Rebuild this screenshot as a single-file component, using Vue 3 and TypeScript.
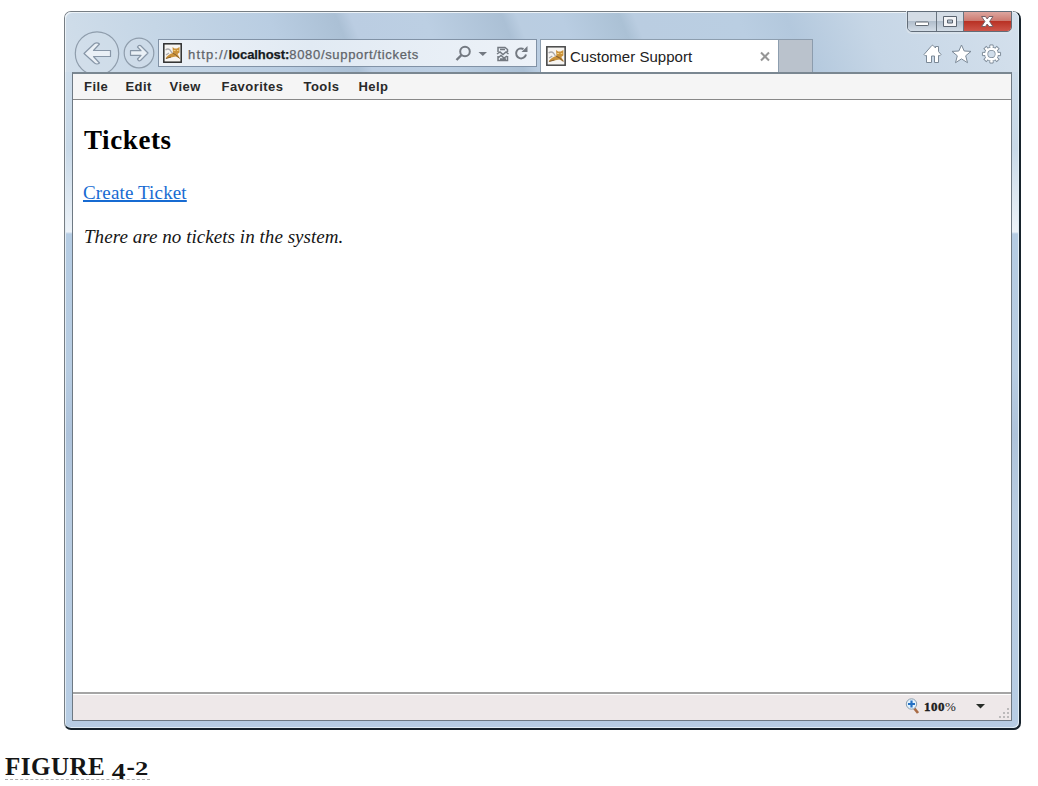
<script setup lang="ts">
const menus = [
  { label: 'File', width: 41.5 },
  { label: 'Edit', width: 44 },
  { label: 'View', width: 52 },
  { label: 'Favorites', width: 82 },
  { label: 'Tools', width: 55 },
  { label: 'Help', width: 40 },
]
const teeth = [0, 45, 90, 135, 180, 225, 270, 315]
const grip = [[8, 0], [4, 4], [8, 4], [0, 8], [4, 8], [8, 8]]
</script>

<template>
  <main class="page">
    <section class="window">
      <header class="chrome">
        <div class="nav">
          <svg class="back" width="46" height="41" viewBox="0 0 46 41">
            <circle cx="23" cy="22.5" r="21.7" fill="#d4dfea" fill-opacity=".45" stroke="#8f9dac" stroke-width="1.2" />
            <path d="M10 22.5 20.5 12.5Q23 11 25.5 13L19.5 19.5H36.5V25.5H19.5L25.5 32Q23 34 20.5 32Z" fill="#eaf0f6" stroke="#8796a7" stroke-width="1.2" stroke-linejoin="round" />
          </svg>
          <svg class="forward" width="32" height="32" viewBox="0 0 32 32">
            <circle cx="16" cy="16" r="14.8" fill="#d4dfea" fill-opacity=".45" stroke="#8f9dac" stroke-width="1.2" />
            <path d="M25 16 17.5 8.5Q15.5 8 14.5 10L18 13.7H7.5V18.3H18L14.5 22Q15.5 24.5 17.5 23.5Z" fill="#eaf0f6" stroke="#8796a7" stroke-width="1.2" stroke-linejoin="round" />
          </svg>
        </div>
        <div class="address">
          <svg class="cat" width="19" height="20" viewBox="0 0 19 20">
            <rect x=".8" y=".8" width="17.4" height="18.4" fill="#f7f5f2" stroke="#2d2d2d" stroke-width="1.5" />
            <path d="M2.5 7Q5 5 7 7L9 10M3 12l3-2" fill="none" stroke="#aaa9ab" stroke-width="1.3" />
            <path d="M2.5 15.5Q5 11 10 10L9.5 4 11.5 5.5H14L16.5 4V9.5L14.5 11 17 15.5 12.5 13.5 8 14.5Z" fill="#cb9239" />
            <path d="M9.5 10 13 12 16.5 15.5M3 15.5l5-1.5" fill="none" stroke="#886332" />
            <path d="M10.5 7.5h2M14 7.5h1.5" stroke="#f0d183" />
          </svg>
          <span class="url"><span class="scheme">http://</span><b>localhost:</b>8080/support/tickets</span>
          <svg class="address-icons" width="76" height="22" viewBox="0 0 76 22" fill="none" stroke="#737981">
            <circle cx="13" cy="8.5" r="4.8" stroke-width="2" /><path d="m9.5 12-5 5" stroke-width="2.4" />
            <path d="M26.5 9h8.5l-4.2 4Z" fill="#737981" stroke="none" />
            <path d="M46 9V4.5h7l2.5 2V9M46 13v4.5h9.5V13M45 11l3-2 3 2.5 3-2.5 2.5 2M48 6.5h5M46 15l3-2.5 3 2.5 3-2M48 16h6" stroke-width="1.5" />
            <path d="M71.5 6A5 5 0 1 0 74 11.5" stroke-width="2" /><path d="M69.5 9h6V3Z" fill="#737981" stroke="none" />
          </svg>
        </div>
        <div class="tab">
          <svg width="20" height="20" viewBox="0 0 19 20" preserveAspectRatio="none">
            <rect x=".8" y=".8" width="17.4" height="18.4" fill="#f7f5f2" stroke="#484848" stroke-width="1.5" />
            <path d="M2.5 7Q5 5 7 7L9 10M3 12l3-2" fill="none" stroke="#aaa9ab" stroke-width="1.3" />
            <path d="M2.5 15.5Q5 11 10 10L9.5 4 11.5 5.5H14L16.5 4V9.5L14.5 11 17 15.5 12.5 13.5 8 14.5Z" fill="#cb9239" />
            <path d="M9.5 10 13 12 16.5 15.5M3 15.5l5-1.5" fill="none" stroke="#886332" />
            <path d="M10.5 7.5h2M14 7.5h1.5" stroke="#f0d183" />
          </svg>
          <span class="tab-title">Customer Support</span>
          <svg class="close-tab" width="12" height="12" viewBox="0 0 12 12"><path d="m2 1.5 8 8M10 1.5 2 9.5" stroke="#969696" stroke-width="2" /></svg>
        </div>
        <div class="new-tab"></div>
        <div class="controls">
          <div class="caption-buttons">
            <span class="caption minimize"><svg width="28" height="20"><rect x="7.5" y="10" width="13" height="3.5" rx=".7" fill="#fff" stroke="#626a73" /></svg></span>
            <span class="caption maximize"><svg width="26" height="20"><path d="M6.5 4.5h13v10h-13ZM10.5 8v3h5V8Z" fill="#f5f5f7" fill-rule="evenodd" stroke="#5b6470" /></svg></span>
            <span class="caption close"><svg width="47" height="20"><path d="M17.5 4.5h4l1.7 2.5L25 4.5h4l-3.4 5 3.4 5h-4L23.2 12l-1.7 2.5h-4l3.4-5Z" fill="#fff" stroke="#746067" /></svg></span>
          </div>
          <div class="tools">
            <svg width="19" height="20" viewBox="0 0 19 20"><path d="M1 10.5 8.8 1.5Q9.5 1 10.2 1.5L12.5 4V2.5h3V7.5L18 10.5Q17 12.5 15.5 11.5V18.5H11.5v-6.5h-3v6.5H3.5v-7Q2 12.5 1 10.5Z" fill="#fff" stroke="#7b8997" /></svg>
            <svg width="21" height="20" viewBox="0 0 21 20"><path d="m10.5 1 2.7 6 6.8.4-5.3 4.4 1.8 6.9-6-3.8-6 3.8 1.8-6.9L1 7.4 7.8 7Z" fill="#fff" stroke="#7b8997" stroke-linejoin="round" /></svg>
            <svg width="21" height="20" viewBox="0 0 21 21">
              <g fill="#fff" stroke="#7b8997"><path v-for="angle in teeth" :key="angle" d="M8.8 4V1h3.4v3" :transform="`rotate(${angle} 10.5 10.5)`" /></g>
              <circle cx="10.5" cy="10.5" r="5.6" fill="none" stroke="#7b8997" stroke-width="4.2" />
              <circle cx="10.5" cy="10.5" r="5.6" fill="none" stroke="#fff" stroke-width="2.6" />
              <g fill="#fff"><path v-for="angle in teeth" :key="angle" d="M9.4 5V2h2.2v3Z" :transform="`rotate(${angle} 10.5 10.5)`" /></g>
            </svg>
          </div>
        </div>
      </header>
      <div class="client">
        <nav class="menu"><span v-for="item in menus" :key="item.label" :style="{ width: item.width + 'px' }">{{ item.label }}</span></nav>
        <article class="content">
          <h1>Tickets</h1>
          <a>Create Ticket</a>
          <p>There are no tickets in the system.</p>
        </article>
        <footer class="status">
          <svg width="15" height="16" viewBox="0 0 15 16"><path d="m9 10 4 5" stroke="#a96b45" stroke-width="2.7" /><circle cx="6.5" cy="6" r="5.2" fill="#e3f1fc" stroke="#8b9faf" /><path d="M6.5 2.5v7M3 6h7" stroke="#2470c3" stroke-width="2.2" /></svg>
          <span class="percent"><b>100</b>%</span>
          <svg class="down" width="9" height="5" viewBox="0 0 9 5"><path d="M0 0h9L4.5 4.5Z" fill="#272c28" /></svg>
          <svg class="grip" width="10" height="10"><rect v-for="([x, y], i) in grip" :key="i" :x="x" :y="y" width="2" height="2" fill="#bcbabb" /></svg>
        </footer>
      </div>
    </section>
    <div class="figure">FIGURE <span class="four">4</span><span class="dash">-</span><span class="two">2</span></div>
  </main>
</template>

<style>
body { margin: 0; background: #fff; }
</style>
<style scoped>
* { box-sizing: border-box; }
svg { display: block; flex: none; }
.page { height: 786px; padding: 11px 0 0 64px; background: #fff; }
.window { width: 957px; height: 719px; padding: 0 7px 8px; border: 1px solid #777e84; border-right: 2px solid #17232c; border-bottom: 2px solid #17232c; border-radius: 7px 8px 7px 7px; background: linear-gradient(#d0deeb 0, #c8d9e8 19%, #ecf2f8 30.7%, #b5cce3 31%, #b8cde2 50%, #aec3db 59%, #b8cce1 70%, #b7cde4); box-shadow: inset 1px 1px #e4edf5, inset -1px -1px #e0edf5; }
.chrome { display: flex; width: 954px; height: 60px; margin-left: -7px; padding-left: 9px; border-radius: 6px 6px 0 0; background: linear-gradient(68deg, #d1deea 0%, #c5d6e6 11%, #b9cde2 23%, #abc0d5 30%, #bbcde2 31.5%, #bccfe3 39%, #abc0d5 47%, #bacde1 48.5%, #b9cde2 53%, #abc1d5 59%, #bacde1 60.5%, #bacee2 71%, #b3c8dd 76%, #c6d6e6 84%, #d4e0ec 100%); box-shadow: inset 1px 1px #edf3f8, inset -1px 0 #e0edf5; }
.nav { display: flex; width: 84px; padding-top: 19px; }
.back { margin-right: 3px; }
.forward { margin-top: 6px; }
.address { display: flex; width: 379px; height: 28px; margin-top: 27px; padding: 3px 4px 0 4px; border: 1px solid #8192a6; background: linear-gradient(90deg, #ecf1f7, #e1eaf3 40%, #edf2f8); }
.url { width: 248px; margin: 3px 0 0 6px; color: #606469; font: 13px/17px "Liberation Sans", Arial, sans-serif; letter-spacing: .67px; white-space: nowrap; -webkit-text-stroke: .25px currentColor; }
.scheme { letter-spacing: 1.15px; }
.url b { color: #151a20; letter-spacing: -.07px; }
.address-icons { margin-left: 16px; }
.tab { display: flex; width: 239px; height: 33px; margin: 27px 0 0 3px; padding: 6px 7px 0 5px; border: 1px solid #8d9eaf; border-bottom: 0; background: #fff; }
.tab-title { margin: 1px 0 0 4px; color: #222; font: 15px/20px "Liberation Sans", Arial, sans-serif; letter-spacing: .03px; white-space: nowrap; }
.close-tab { margin: 5px 0 0 auto; }
.new-tab { width: 34px; height: 33px; margin-top: 27px; border: 1px solid #8c9cad; border-left: 0; border-bottom: 0; background: #bac2cc; }
.controls { display: flex; flex-direction: column; align-items: flex-end; margin-left: auto; padding-right: 7px; }
.caption-buttons { display: flex; width: 105px; height: 21px; margin-top: -1px; overflow: hidden; border: 1px solid #626d79; border-radius: 0 0 5px 5px; box-shadow: 0 1px 0 1px #d8e2eb; }
.caption { border-right: 1px solid #69747f; background: linear-gradient(#d4dce5 0 47%, #b1becc 50%, #d2dce6); }
.minimize { width: 29px; }
.maximize { width: 27px; }
.close { width: 47px; border: 0; background: linear-gradient(#dda69f 0, #cc796f 47%, #b93225 50%, #cd5549); }
.tools { display: flex; gap: 9px; margin: 12px 10px 0 0; }
.client { width: 940px; height: 649px; border: 1px solid #6e7983; border-top: 2px solid #7a8791; background: #fff; }
.menu { display: flex; height: 26px; padding-left: 11px; border-bottom: 1px solid #888; background: #f5f5f5; color: #292929; font: bold 13px/25px "Liberation Sans", Arial, sans-serif; letter-spacing: .45px; }
.menu span { flex: none; white-space: nowrap; }
.content { height: 592px; padding: 23px 10px; color: #151515; font: 19px/22px "Liberation Serif", "Times New Roman", serif; }
h1 { margin: 0 0 25px; padding-left: 1px; color: #000; font: bold 27px/34px "Liberation Serif", serif; letter-spacing: .6px; }
a { display: block; width: max-content; color: #176bd2; text-decoration: underline; text-decoration-thickness: 2px; text-underline-offset: 1px; letter-spacing: .15px; }
p { margin: 22px 0 0 1px; font-style: italic; letter-spacing: .05px; }
.status { display: flex; height: 28px; padding: 4px 2px 0 0; border-top: 2px solid #a5a5a5; background: #eee8e9; box-shadow: inset 0 1px #fff; justify-content: flex-end; }
.percent { width: 34px; margin: 0 0 0 4px; color: #222; font: 13px/17px "Liberation Serif", serif; letter-spacing: .5px; white-space: nowrap; }
.percent b { -webkit-text-stroke: .35px #111; }
.down { margin: 6px 14px 0 18px; }
.grip { margin-top: 10px; }
.figure { width: 145px; height: 28px; margin: 22px 0 0 -59px; border-bottom: 1px dashed #aaa; color: #151515; font: bold 25px/30px Georgia, "Liberation Serif", serif; letter-spacing: .5px; white-space: nowrap; }
.four, .two { display: inline-block; line-height: 20px; letter-spacing: 0; }
.four { font-size: 23px; transform: translateY(4px) scaleX(1.2); margin-left: 1px; }
.dash { margin-left: 2px; }
.two { font-size: 19px; transform: scaleX(1.4); margin-left: 2px; }
</style>
